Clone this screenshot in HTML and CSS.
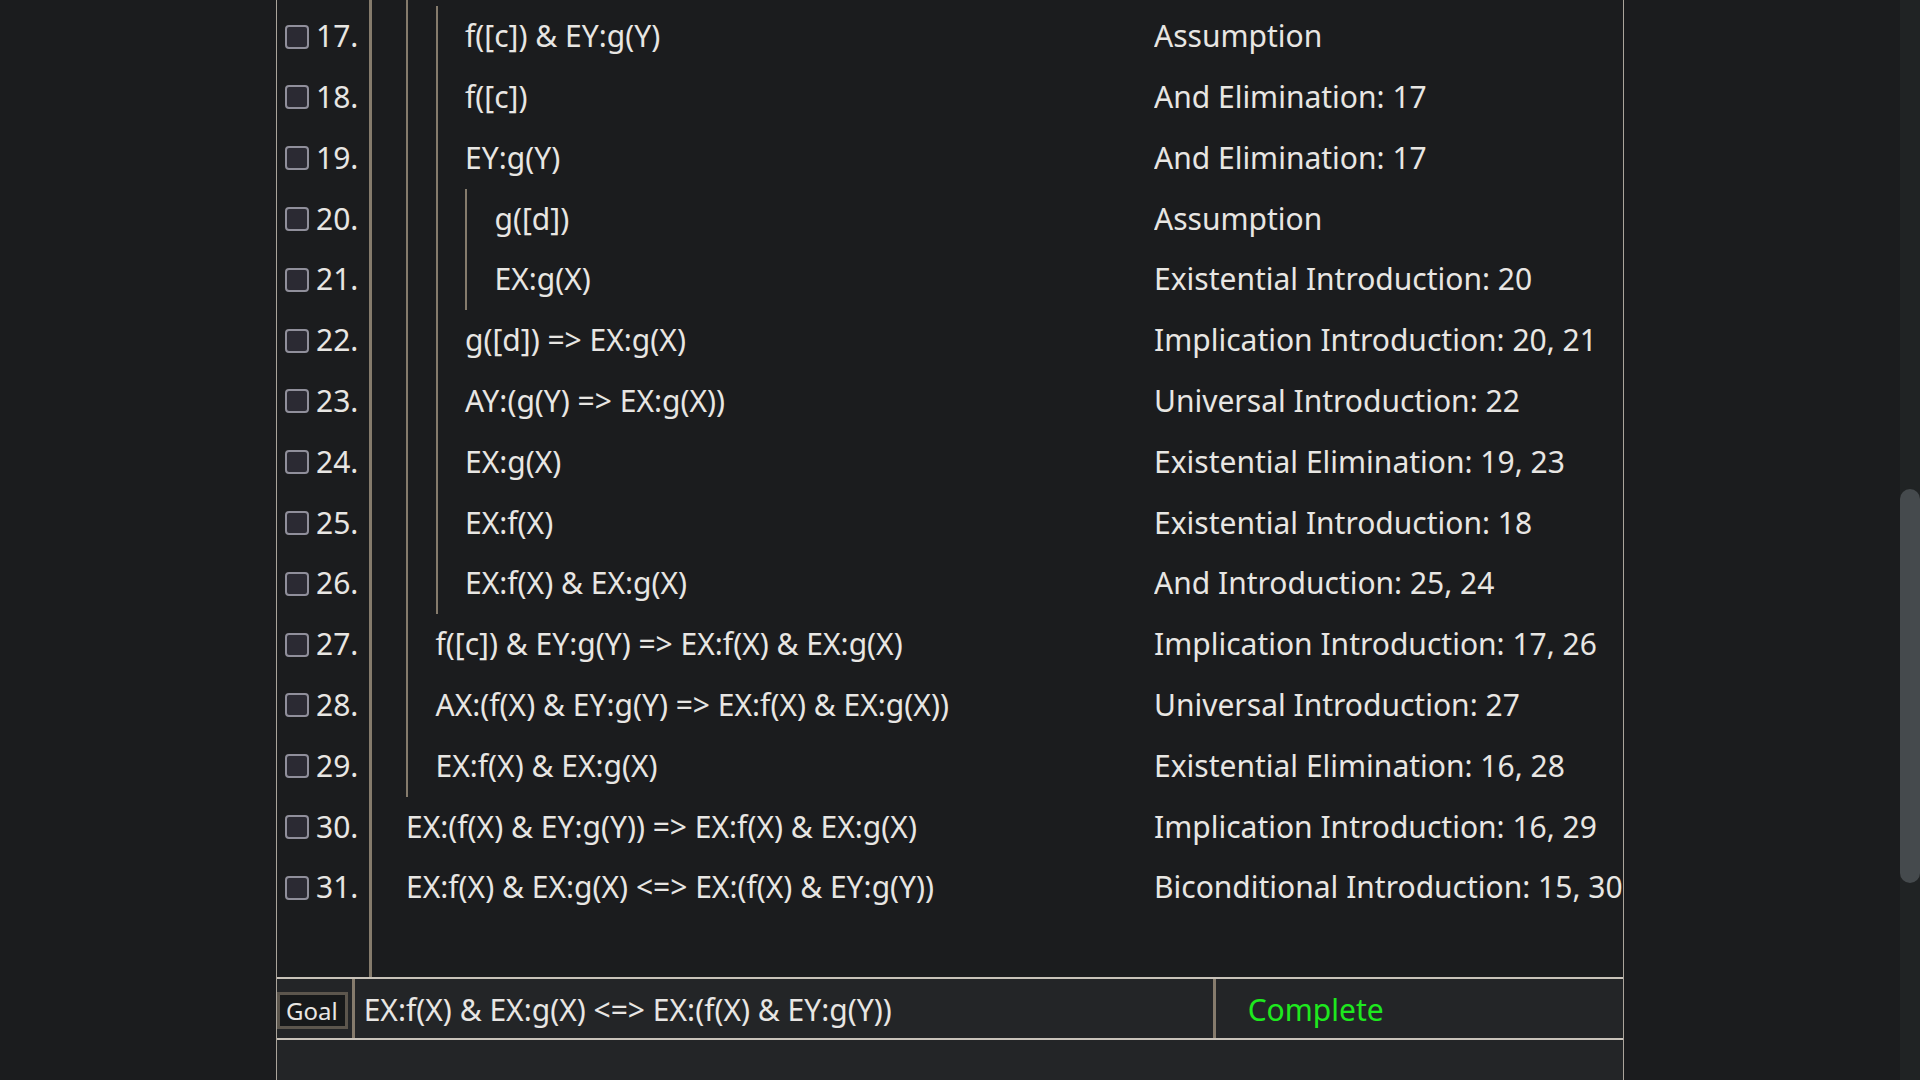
FILE: index.html
```html
<!DOCTYPE html>
<html>
<head>
<meta charset="utf-8">
<title>Proof</title>
<link rel="stylesheet" href="styles.css">
</head>
<body>
<div class="viewport">
  <div class="panel">
    <div class="proof">
      <div class="row top"><div class="gutter"></div><div class="formula"><span class="bar"></span></div><div class="just"></div></div>

      <div class="row"><div class="gutter"><span class="cb"></span><span class="num">17.</span></div><div class="formula"><span class="bar"></span><span class="bar"></span><span class="txt">f([c]) &amp; EY:g(Y)</span></div><div class="just">Assumption</div></div>
      <div class="row"><div class="gutter"><span class="cb"></span><span class="num">18.</span></div><div class="formula"><span class="bar"></span><span class="bar"></span><span class="txt">f([c])</span></div><div class="just">And Elimination: 17</div></div>
      <div class="row"><div class="gutter"><span class="cb"></span><span class="num">19.</span></div><div class="formula"><span class="bar"></span><span class="bar"></span><span class="txt">EY:g(Y)</span></div><div class="just">And Elimination: 17</div></div>
      <div class="row"><div class="gutter"><span class="cb"></span><span class="num">20.</span></div><div class="formula"><span class="bar"></span><span class="bar"></span><span class="bar"></span><span class="txt">g([d])</span></div><div class="just">Assumption</div></div>
      <div class="row"><div class="gutter"><span class="cb"></span><span class="num">21.</span></div><div class="formula"><span class="bar"></span><span class="bar"></span><span class="bar"></span><span class="txt">EX:g(X)</span></div><div class="just">Existential Introduction: 20</div></div>
      <div class="row"><div class="gutter"><span class="cb"></span><span class="num">22.</span></div><div class="formula"><span class="bar"></span><span class="bar"></span><span class="txt">g([d]) =&gt; EX:g(X)</span></div><div class="just">Implication Introduction: 20, 21</div></div>
      <div class="row"><div class="gutter"><span class="cb"></span><span class="num">23.</span></div><div class="formula"><span class="bar"></span><span class="bar"></span><span class="txt">AY:(g(Y) =&gt; EX:g(X))</span></div><div class="just">Universal Introduction: 22</div></div>
      <div class="row"><div class="gutter"><span class="cb"></span><span class="num">24.</span></div><div class="formula"><span class="bar"></span><span class="bar"></span><span class="txt">EX:g(X)</span></div><div class="just">Existential Elimination: 19, 23</div></div>
      <div class="row"><div class="gutter"><span class="cb"></span><span class="num">25.</span></div><div class="formula"><span class="bar"></span><span class="bar"></span><span class="txt">EX:f(X)</span></div><div class="just">Existential Introduction: 18</div></div>
      <div class="row"><div class="gutter"><span class="cb"></span><span class="num">26.</span></div><div class="formula"><span class="bar"></span><span class="bar"></span><span class="txt">EX:f(X) &amp; EX:g(X)</span></div><div class="just">And Introduction: 25, 24</div></div>
      <div class="row"><div class="gutter"><span class="cb"></span><span class="num">27.</span></div><div class="formula"><span class="bar"></span><span class="txt">f([c]) &amp; EY:g(Y) =&gt; EX:f(X) &amp; EX:g(X)</span></div><div class="just">Implication Introduction: 17, 26</div></div>
      <div class="row"><div class="gutter"><span class="cb"></span><span class="num">28.</span></div><div class="formula"><span class="bar"></span><span class="txt">AX:(f(X) &amp; EY:g(Y) =&gt; EX:f(X) &amp; EX:g(X))</span></div><div class="just">Universal Introduction: 27</div></div>
      <div class="row"><div class="gutter"><span class="cb"></span><span class="num">29.</span></div><div class="formula"><span class="bar"></span><span class="txt">EX:f(X) &amp; EX:g(X)</span></div><div class="just">Existential Elimination: 16, 28</div></div>
      <div class="row"><div class="gutter"><span class="cb"></span><span class="num">30.</span></div><div class="formula"><span class="txt">EX:(f(X) &amp; EY:g(Y)) =&gt; EX:f(X) &amp; EX:g(X)</span></div><div class="just">Implication Introduction: 16, 29</div></div>
      <div class="row"><div class="gutter"><span class="cb"></span><span class="num">31.</span></div><div class="formula"><span class="txt">EX:f(X) &amp; EX:g(X) &lt;=&gt; EX:(f(X) &amp; EY:g(Y))</span></div><div class="just">Biconditional Introduction: 15, 30</div></div>

      <div class="row fill"><div class="gutter"></div><div class="formula"></div><div class="just"></div></div>
    </div>
    <div class="footer">
      <div class="goal-wrap"><span class="goal-tag">Goal</span></div>
      <div class="goal-formula">EX:f(X) &amp; EX:g(X) &lt;=&gt; EX:(f(X) &amp; EY:g(Y))</div>
      <div class="status">Complete</div>
    </div>
    <div class="below"></div>
  </div>
</div>
<div class="scrollbar"><div class="thumb"></div></div>
</body>
</html>
```
FILE: styles.css
```css
* {
  box-sizing: border-box;
}

html, body {
  margin: 0;
  padding: 0;
}

body {
  background: #1b1c1e;
  color: #e8e6e3;
  font-family: "Noto Sans", "Open Sans", sans-serif;
  overflow: hidden;
}

.viewport {
  width: 1900px;
  height: 1080px;
}

.panel {
  width: 1348px;
  height: 1080px;
  margin: 0 auto;
  border-left: 1px solid #aaa49b;
  border-right: 1px solid #aaa49b;
  display: flex;
  flex-direction: column;
}

.proof {
  height: 977px;
  flex: none;
  display: flex;
  flex-direction: column;
  font-size: 30px;
}

.row {
  display: flex;
  height: 60.8px;
  line-height: 60.8px;
  white-space: nowrap;
  flex: none;
}

.row.top {
  height: 6.3px;
}

.row.fill {
  flex: 1;
}

.gutter {
  width: 95px;
  flex: none;
  padding-left: 8px;
  border-right: 3px solid #857b6c;
  display: flex;
  align-items: center;
  gap: 8px;
}

.cb {
  width: 24px;
  height: 24px;
  flex: none;
  border: 2.5px solid #908f9b;
  border-radius: 4px;
  background: #2b2a33;
}

.num {
  margin-left: -1px;
}

.formula {
  width: 782px;
  flex: none;
  padding-left: 34px;
  display: flex;
}

.bar {
  width: 29.5px;
  flex: none;
  border-left: 2px solid #857b6c;
}

.just {
  flex: 1;
  overflow: hidden;
}

.footer {
  height: 63px;
  flex: none;
  border-top: 2px solid #c9c3ba;
  border-bottom: 2px solid #c9c3ba;
  background: #232527;
  display: flex;
  font-size: 30px;
  white-space: nowrap;
}

.goal-wrap {
  display: flex;
  align-items: center;
  padding-top: 4px;
  margin-right: 4px;
}

.goal-tag {
  font-size: 24px;
  line-height: 31px;
  padding: 0 7px 0 6px;
  border: 3px solid #5c564d;
  background: #17191a;
}

.goal-formula {
  width: 861px;
  flex: none;
  border-left: 3px solid #857b6c;
  padding-left: 9px;
  display: flex;
  align-items: center;
  padding-top: 2px;
}

.status {
  flex: 1;
  border-left: 3px solid #857b6c;
  padding-left: 32px;
  display: flex;
  align-items: center;
  padding-top: 2px;
  color: #1ee91e;
}

.below {
  flex: 1;
  background: #232527;
}

.scrollbar {
  position: fixed;
  top: 0;
  right: 0;
  width: 20px;
  height: 1080px;
  background: #202324;
}

.thumb {
  position: absolute;
  top: 489px;
  left: 0;
  width: 20px;
  height: 394px;
  border-radius: 10px;
  background: #454a4d;
}
```
